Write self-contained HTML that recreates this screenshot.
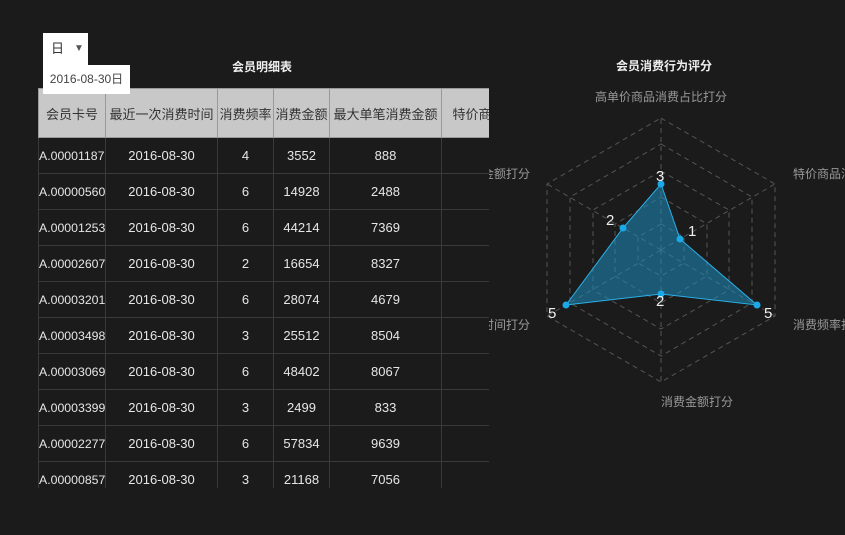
<!DOCTYPE html>
<html><head><meta charset="utf-8"><style>
body{margin:0;width:845px;height:535px;background:#1b1b1b;overflow:hidden;position:relative;font-family:"Liberation Sans","Noto Sans CJK SC",sans-serif;}
.t{position:absolute;color:#eee;font-size:13px;}
table{position:absolute;border-collapse:collapse;table-layout:fixed;font-size:13px;width:477px;}
td,th{border:1px solid #3a3a3a;text-align:center;overflow:hidden;white-space:nowrap;padding:0;color:#e6e6e6;height:35px;}
td:first-child{font-size:12.3px;text-align:left;}
th{background:#c8c8c8;color:#333;font-weight:normal;height:48px;border-color:#999;font-size:13px;}
.wrap{position:absolute;left:38px;top:88px;width:451px;height:400px;overflow:hidden;background:#1b1b1b;}
.wrap table{left:0;top:0}
</style></head><body>
<svg width="845" height="535" style="position:absolute;left:0;top:0">
<g fill="none" stroke="#555" stroke-dasharray="5,4" stroke-width="1">
<polygon points="661,118 775,184 775,316 661,382 547,316 547,184"/>
<polygon points="661,144 752,197 752,303 661,356 570,303 570,197"/>
<polygon points="661,171 729,210 729,290 661,329 593,290 593,210"/>
<polygon points="661,197 707,224 707,276 661,303 615,276 615,224"/>
<polygon points="661,224 684,237 684,263 661,276 638,263 638,237"/>
<line x1="661" y1="250" x2="661" y2="118"/><line x1="661" y1="250" x2="775" y2="184"/><line x1="661" y1="250" x2="775" y2="316"/><line x1="661" y1="250" x2="661" y2="382"/><line x1="661" y1="250" x2="547" y2="316"/><line x1="661" y1="250" x2="547" y2="184"/>
</g>
<polygon points="661,184 680,239 757,305 661,294 566,305 623,228" fill="rgba(30,140,190,0.55)" stroke="#2ab0e8" stroke-width="1"/>
<g fill="#1aa8e8"><circle cx="661" cy="184" r="3.5"/><circle cx="680" cy="239" r="3.5"/><circle cx="757" cy="305" r="3.5"/><circle cx="661" cy="294" r="3.5"/><circle cx="566" cy="305" r="3.5"/><circle cx="623" cy="228" r="3.5"/></g>
<g fill="#eee" font-size="15" font-family="Liberation Sans,sans-serif"><text x="656" y="181">3</text><text x="688" y="236">1</text><text x="764" y="318">5</text><text x="656" y="306">2</text><text x="548" y="318">5</text><text x="606" y="225">2</text></g>
<g fill="#999" font-size="12" font-family="Liberation Sans,Noto Sans CJK SC,sans-serif">
<text x="595" y="101">高单价商品消费占比打分</text>
<text x="793" y="178">特价商品消费占比打分</text>
<text x="793" y="329">消费频率打分</text>
<text x="661" y="406">消费金额打分</text>
<text x="530" y="178" text-anchor="end">最大单笔金额打分</text>
<text x="530" y="329" text-anchor="end">最近消费时间打分</text>
</g>
<text x="664" y="70" fill="#eee" font-size="12" font-weight="bold" text-anchor="middle" font-family="Liberation Sans,Noto Sans CJK SC,sans-serif">会员消费行为评分</text>
</svg>
<div class="t" style="left:232px;top:58px;font-weight:bold;font-size:12px">会员明细表</div>
<div class="wrap"><table>
<colgroup><col style="width:67px"><col style="width:112px"><col style="width:56px"><col style="width:56px"><col style="width:112px"><col style="width:74px"></colgroup>
<tr><th>会员卡号</th><th>最近一次消费时间</th><th>消费频率</th><th>消费金额</th><th>最大单笔消费金额</th><th>特价商品</th></tr>
<tr><td>A.00001187</td><td>2016-08-30</td><td>4</td><td>3552</td><td>888</td><td></td></tr>
<tr><td>A.00000560</td><td>2016-08-30</td><td>6</td><td>14928</td><td>2488</td><td></td></tr>
<tr><td>A.00001253</td><td>2016-08-30</td><td>6</td><td>44214</td><td>7369</td><td></td></tr>
<tr><td>A.00002607</td><td>2016-08-30</td><td>2</td><td>16654</td><td>8327</td><td></td></tr>
<tr><td>A.00003201</td><td>2016-08-30</td><td>6</td><td>28074</td><td>4679</td><td></td></tr>
<tr><td>A.00003498</td><td>2016-08-30</td><td>3</td><td>25512</td><td>8504</td><td></td></tr>
<tr><td>A.00003069</td><td>2016-08-30</td><td>6</td><td>48402</td><td>8067</td><td></td></tr>
<tr><td>A.00003399</td><td>2016-08-30</td><td>3</td><td>2499</td><td>833</td><td></td></tr>
<tr><td>A.00002277</td><td>2016-08-30</td><td>6</td><td>57834</td><td>9639</td><td></td></tr>
<tr><td>A.00000857</td><td>2016-08-30</td><td>3</td><td>21168</td><td>7056</td><td></td></tr>
</table></div>
<div style="position:absolute;left:43px;top:33px;width:45px;height:32px;background:#fff;color:#333;font-size:13px;line-height:32px;font-family:'Liberation Sans','Noto Sans CJK SC',sans-serif"><span style="margin-left:8px">日</span><span style="position:absolute;left:31px;font-size:10px;color:#555">▼</span></div>
<div style="position:absolute;left:43px;top:65px;width:87px;height:29px;background:#fff;color:#444;font-size:12px;line-height:29px;text-align:center;font-family:'Liberation Sans','Noto Sans CJK SC',sans-serif">2016-08-30日</div>
</body></html>
